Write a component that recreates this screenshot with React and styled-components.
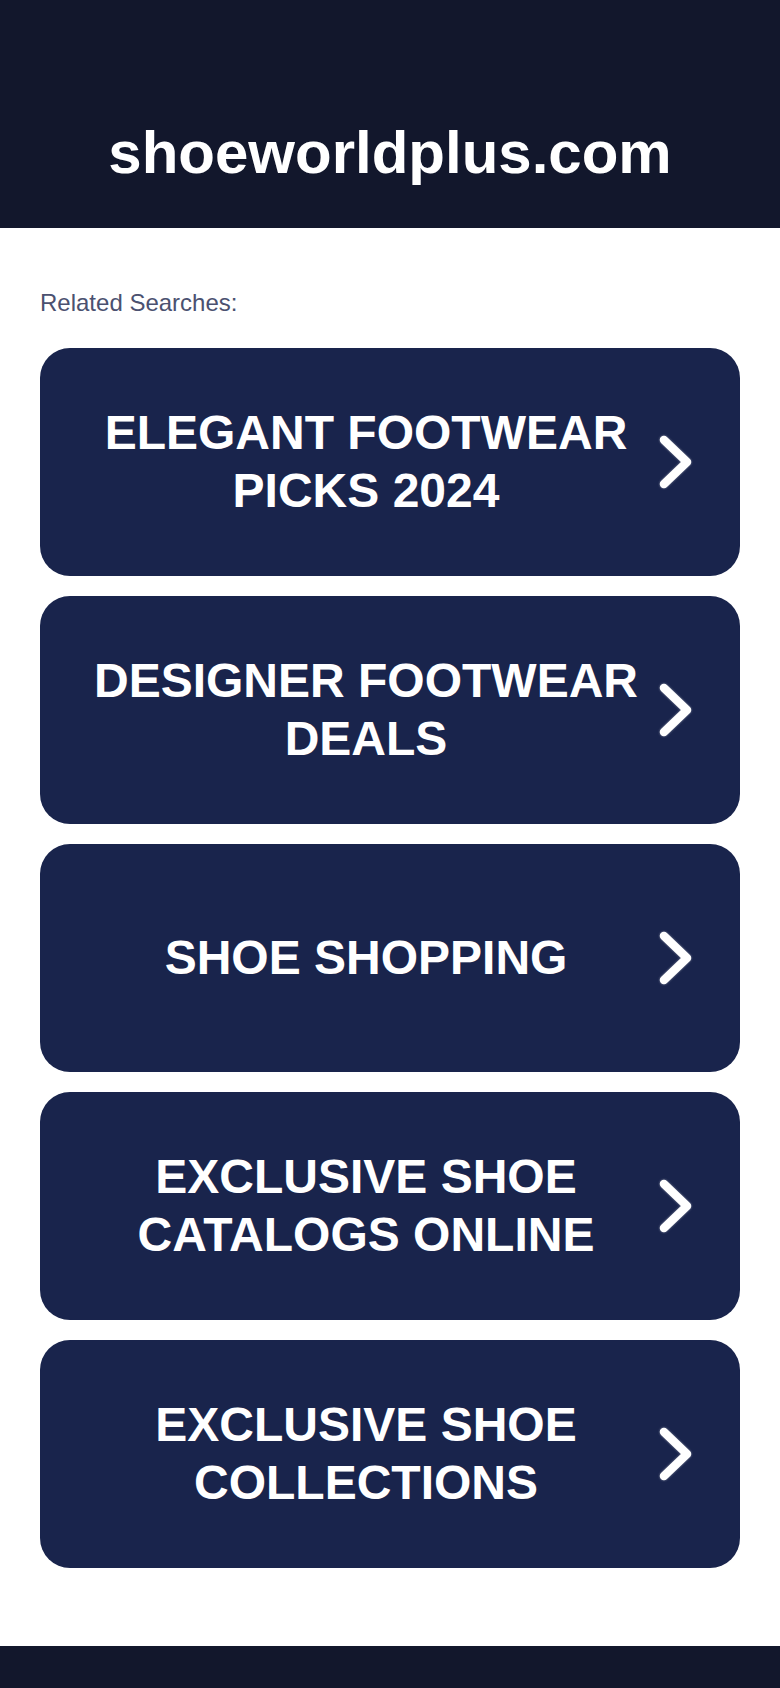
import React from "react";
import styled, { createGlobalStyle } from "styled-components";

const searches = [
	["ELEGANT FOOTWEAR", "PICKS 2024"],
	["DESIGNER FOOTWEAR", "DEALS"],
	["SHOE SHOPPING"],
	["EXCLUSIVE SHOE", "CATALOGS ONLINE"],
	["EXCLUSIVE SHOE", "COLLECTIONS"],
];

function Chevron() {
	return (
		<ChevronBox>
			<svg width="40" height="58" viewBox="0 0 40 58" fill="none">
				<path
					d="M8 7 L31 29 L8 51"
					stroke="#fff"
					strokeWidth="8.5"
					strokeLinecap="round"
					strokeLinejoin="round"
				/>
			</svg>
		</ChevronBox>
	);
}

function App() {
	return (
		<>
			<GlobalStyle />
			<Page>
				<Header>
					<Domain>shoeworldplus.com</Domain>
				</Header>
				<Main>
					<Label>Related Searches:</Label>
					<List>
						{searches.map((lines, i) => (
							<SearchLink key={i} href="#">
								<LinkText>
									{lines.map((l, j) => (
										<span key={j}>{l}</span>
									))}
								</LinkText>
								<Chevron />
							</SearchLink>
						))}
					</List>
				</Main>
				<Footer />
			</Page>
		</>
	);
}

export default App;

const GlobalStyle = createGlobalStyle`
	html, body {
		margin: 0;
		padding: 0;
		background: #fff;
	}
	* {
		box-sizing: border-box;
	}
`;

const Page = styled.div`
	display: flex;
	flex-direction: column;
	font-family: "Liberation Sans", Arial, Helvetica, sans-serif;
`;

const Header = styled.header`
	height: 228px;
	padding-top: 117px;
	background: #12172c;
	text-align: center;
`;

const Domain = styled.h1`
	margin: 0;
	font-size: 60px;
	line-height: 72px;
	font-weight: 700;
	color: #fff;
`;

const Main = styled.main`
	padding: 61px 40px 78px;
`;

const Label = styled.div`
	font-size: 24px;
	line-height: 28px;
	color: #4b5170;
	margin-bottom: 31px;
`;

const List = styled.div`
	display: flex;
	flex-direction: column;
	gap: 20px;
`;

const SearchLink = styled.a`
	display: flex;
	align-items: center;
	height: 228px;
	padding: 0 40px;
	border-radius: 30px;
	background: #19244c;
	text-decoration: none;
	color: #fff;
`;

const LinkText = styled.div`
	flex: 1;
	display: flex;
	flex-direction: column;
	align-items: center;
	text-align: center;
	font-size: 48px;
	line-height: 1.2;
	font-weight: 700;
`;

const ChevronBox = styled.div`
	width: 48px;
	display: flex;
	justify-content: center;
	svg {
		filter: drop-shadow(0 0 1px rgba(255, 255, 255, 0.45));
	}
`;

const Footer = styled.footer`
	height: 42px;
	background: #12172c;
`;
